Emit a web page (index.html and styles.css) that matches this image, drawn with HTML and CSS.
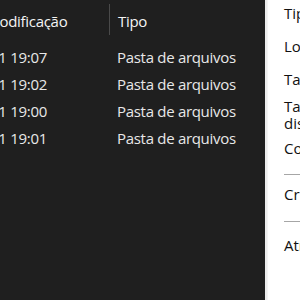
FILE: index.html
```html
<!DOCTYPE html>
<html>
<head>
<meta charset="utf-8">
<link rel="stylesheet" href="styles.css">
</head>
<body>
<div class="app">
  <div class="list">
    <div class="header">
      <div class="col-date"><span class="clip-date">Data de modificação</span></div>
      <div class="sep"></div>
      <div class="col-type">Tipo</div>
    </div>
    <div class="row">
      <div class="col-date"><span class="clip-row">21/09/2021 19:07</span></div>
      <div class="col-type">Pasta de arquivos</div>
    </div>
    <div class="row">
      <div class="col-date"><span class="clip-row">21/09/2021 19:02</span></div>
      <div class="col-type">Pasta de arquivos</div>
    </div>
    <div class="row">
      <div class="col-date"><span class="clip-row">21/09/2021 19:00</span></div>
      <div class="col-type">Pasta de arquivos</div>
    </div>
    <div class="row">
      <div class="col-date"><span class="clip-row">21/09/2021 19:01</span></div>
      <div class="col-type">Pasta de arquivos</div>
    </div>
  </div>
  <div class="panel">
    <div class="strip"></div>
    <div class="props">
      <div class="lbl l-tipo">Tipo:</div>
      <div class="lbl l-local">Local:</div>
      <div class="lbl l-tam">Tamanho:</div>
      <div class="lbl l-disco">Tamanho em<br>disco:</div>
      <div class="lbl l-cont">Contém:</div>
      <div class="hr h1"></div>
      <div class="lbl l-cri">Criado:</div>
      <div class="hr h2"></div>
      <div class="lbl l-atr">Atributos:</div>
    </div>
  </div>
</div>
</body>
</html>
```

FILE: styles.css
```css
* { box-sizing: border-box; }
html, body { margin: 0; padding: 0; }
body {
  width: 300px;
  height: 300px;
  overflow: hidden;
  font-family: "Open Sans", "Noto Sans", sans-serif;
  font-size: 15px;
}
.app {
  display: flex;
  width: 300px;
  height: 300px;
}
.list {
  width: 265px;
  flex: none;
  background: #1f1f1f;
  color: #e8e8e8;
  overflow: hidden;
  letter-spacing: -0.3px;
}
.header {
  display: flex;
  align-items: center;
  height: 43px;
  color: #f4f4f4;
}
.sep {
  width: 1px;
  height: 31px;
  background: #4a4a4a;
  margin-top: -4px;
  flex: none;
}
.col-date {
  width: 109px;
  flex: none;
  overflow: hidden;
  white-space: nowrap;
  line-height: 17px;
}
.col-type {
  padding-left: 8px;
  white-space: nowrap;
  line-height: 17px;
}
.row {
  display: flex;
  align-items: center;
  height: 27px;
}
.row .col-date { width: 109px; }
.header + .row { margin-top: 1px; }
.clip-date { display: inline-block; margin-left: -70px; }
.clip-row { display: inline-block; margin-left: -70px; }
.panel {
  flex: 1;
  display: flex;
  background: #ffffff;
}
.strip {
  width: 3px;
  background: #ececec;
  border-right: 1px solid #f4f4f4;
  flex: none;
}
.props {
  padding-left: 16px;
  color: #111;
  white-space: nowrap;
  line-height: 17px;
  flex: 1;
}
.l-tipo { margin-top: 5px; }
.l-local { margin-top: 16px; }
.l-tam { margin-top: 16px; }
.l-disco { margin-top: 10px; }
.l-cont { margin-top: 8px; }
.hr { height: 1px; background: #a6a6a6; }
.h1 { margin-top: 17px; }
.l-cri { margin-top: 11px; }
.h2 { margin-top: 18px; }
.l-atr { margin-top: 15px; }
```
